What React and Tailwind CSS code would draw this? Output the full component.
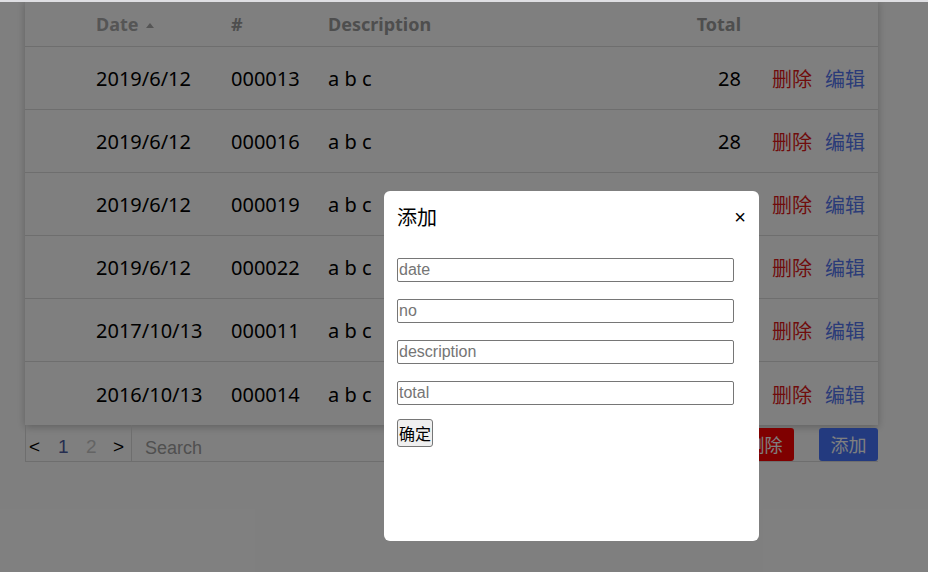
import React from 'react';

const ROWS = [
    { date: '2019/6/12', no: '000013', desc: 'a b c', total: 28 },
    { date: '2019/6/12', no: '000016', desc: 'a b c', total: 28 },
    { date: '2019/6/12', no: '000019', desc: 'a b c', total: 28 },
    { date: '2019/6/12', no: '000022', desc: 'a b c', total: 28 },
    { date: '2017/10/13', no: '000011', desc: 'a b c', total: 28 },
    { date: '2016/10/13', no: '000014', desc: 'a b c', total: 28 },
];

const SANS = { fontFamily: '"Noto Sans", "Noto Sans CJK SC", sans-serif' };
const ARIAL = { fontFamily: '"Liberation Sans", "Noto Sans CJK SC", sans-serif' };
const CJK = { fontFamily: '"Noto Sans CJK SC", sans-serif' };

function RecordTable() {
    return (
        <div className="ml-[25px] w-[853px] bg-white shadow-[0_2px_8px_rgba(0,0,0,0.25)]" style={SANS}>
            <div className="flex items-center h-[47px] pt-[3px] border-b border-[#dcdcdc] text-[18px] font-bold text-[#9c9c9c]">
                <div className="w-[71px]" />
                <div className="w-[135px] flex items-center gap-[7px]">
                    <span className="text-[#ababab]">Date</span>
                    <svg width="8" height="5" viewBox="0 0 8 5" className="mt-[2px]">
                        <path d="M0 5 L4 0 L8 5 Z" fill="#ababab" />
                    </svg>
                </div>
                <div className="w-[97px]">#</div>
                <div className="flex-1">Description</div>
                <div className="w-[80px] text-right">Total</div>
                <div className="w-[137px]" />
            </div>
            {ROWS.map((r, i) => (
                <div
                    key={r.no}
                    className={`flex items-center h-[63px] pt-[2px] text-[20px] text-black ${i < ROWS.length - 1 ? 'border-b border-[#dcdcdc]' : ''}`}
                >
                    <div className="w-[71px]" />
                    <div className="w-[135px]">{r.date}</div>
                    <div className="w-[97px]">{r.no}</div>
                    <div className="flex-1">{r.desc}</div>
                    <div className="w-[80px] text-right">{r.total}</div>
                    <div className="w-[137px] flex gap-[13px] pl-[31px] text-[20px]" style={CJK}>
                        <span className="text-[#e01818] cursor-pointer">删除</span>
                        <span className="text-[#5476f0] cursor-pointer">编辑</span>
                    </div>
                </div>
            ))}
        </div>
    );
}

function Footer() {
    return (
        <div className="ml-[25px] w-[853px] flex items-stretch h-[37px] border-l border-b border-[#dcdcdc]" style={ARIAL}>
            <div className="w-[106px] flex items-center border-r border-[#dcdcdc] text-[19px] pt-[9px]">
                <span className="ml-[3px] w-[26px] text-black">&lt;</span>
                <span className="ml-[3px] w-[28px] text-[#4a5aa0]">1</span>
                <span className="w-[27px] text-[#c8c8c8]">2</span>
                <span className="text-black">&gt;</span>
            </div>
            <input
                placeholder="Search"
                className="flex-1 min-w-0 pl-[13px] pt-[10px] text-[18px] outline-none placeholder:text-[#a0a0a0] bg-transparent"
            />
            <div className="flex items-center gap-[25px] pt-[2px]" style={CJK}>
                <button className="w-[59px] h-[33px] rounded-[3px] bg-[#ff0000] text-white text-[18px]">删除</button>
                <button className="w-[59px] h-[33px] rounded-[3px] bg-[#4674ff] text-white text-[18px]">添加</button>
            </div>
        </div>
    );
}

function AddModal() {
    const fields = ['date', 'no', 'description', 'total'];
    return (
        <div className="absolute left-[384px] top-[191px] w-[375px] h-[350px] bg-white rounded-[6px] px-[13px] pt-[14px]">
            <div className="flex items-center justify-between h-[24px]">
                <span className="text-[20px] text-black" style={CJK}>添加</span>
                <span className="text-[20px] leading-none text-black" style={ARIAL}>×</span>
            </div>
            <div className="mt-[29px] flex flex-col gap-[17px]">
                {fields.map(f => (
                    <input
                        key={f}
                        placeholder={f}
                        className="w-[337px] h-[24px] px-[1px] border border-[#767676] rounded-[2px] text-[16px] placeholder:text-[#757575] outline-none"
                        style={ARIAL}
                    />
                ))}
            </div>
            <button
                className="mt-[14px] h-[28px] px-[1px] border border-[#767676] rounded-[3px] bg-[#efefef] text-[16px] text-black"
                style={CJK}
            >
                确定
            </button>
        </div>
    );
}

export default function App() {
    return (
        <div className="relative w-[928px] h-[572px] overflow-hidden bg-white">
            <RecordTable />
            <Footer />
            <div className="absolute inset-0 bg-black/50" />
            <div className="absolute left-0 right-0 top-0 h-[2px] bg-[#dfdfe3]" />
            <AddModal />
        </div>
    );
}
